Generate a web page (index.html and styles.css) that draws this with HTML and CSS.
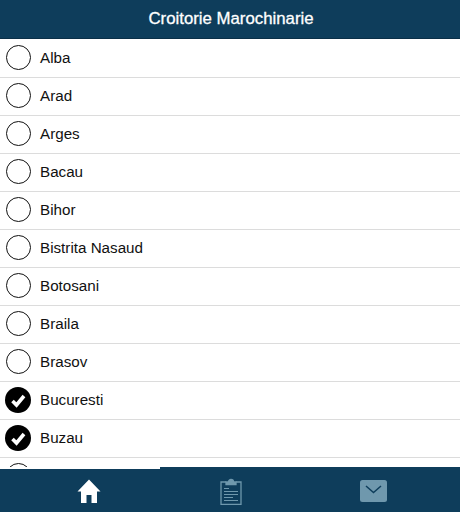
FILE: index.html
```html
<!DOCTYPE html>
<html lang="en">
<head>
    <meta charset="UTF-8">
    <meta name="viewport" content="width=device-width, initial-scale=1.0">
    <title>Croitorie Marochinarie</title>
    <link rel="stylesheet" href="styles.css">
</head>
<body>
<div class="app">
    <header class="top-bar">Croitorie Marochinarie</header>

    <!-- County list -->
    <ul class="county-list">
        <li class="county"><span class="radio"></span>Alba</li>
        <li class="county"><span class="radio"></span>Arad</li>
        <li class="county"><span class="radio"></span>Arges</li>
        <li class="county"><span class="radio"></span>Bacau</li>
        <li class="county"><span class="radio"></span>Bihor</li>
        <li class="county"><span class="radio"></span>Bistrita Nasaud</li>
        <li class="county"><span class="radio"></span>Botosani</li>
        <li class="county"><span class="radio"></span>Braila</li>
        <li class="county"><span class="radio"></span>Brasov</li>
        <li class="county">
            <span class="radio checked">
                <svg viewBox="0 0 26 26" width="26" height="26"><path d="M7.500 14l4 4 7.500-9" fill="none" stroke="#fff" stroke-width="3.600"/></svg>
            </span>Bucuresti
        </li>
        <li class="county">
            <span class="radio checked">
                <svg viewBox="0 0 26 26" width="26" height="26"><path d="M7.500 14l4 4 7.500-9" fill="none" stroke="#fff" stroke-width="3.600"/></svg>
            </span>Buzau
        </li>
        <li class="county"><span class="radio"></span></li>
    </ul>

    <!-- Tab bar -->
    <nav class="tab-bar">
        <div class="tab">
            <svg viewBox="0 0 24 24" width="24" height="24"><path d="M12 0.500L0.500 12.500H4V24h5.500v-8h5v8H20V12.500h3.500z" fill="#fff"/></svg>
        </div>
        <div class="tab">
            <svg viewBox="0 0 22 27" width="22" height="27" fill="none" stroke="#6f98ad" stroke-width="1.300">
                <path d="M6 4H1v22.300h20V4h-5"/>
                <path d="M6 6.500V4h2.500a2.500 2.500 0 0 1 5 0H16v2.500z" fill="#6f98ad"/>
                <path d="M4 10.500h5M4 13.500h14M4 16.500h14M4 19.500h9M4 22.500h14" stroke-width="1.200"/>
            </svg>
        </div>
        <div class="tab">
            <svg viewBox="0 0 27 22" width="27" height="22"><rect width="27" height="22" rx="2.500" fill="#6f98ad"/><path d="M6 6l7.500 6.500L21 6" fill="none" stroke="#0e3d5b" stroke-width="1.500"/></svg>
        </div>
    </nav>
</div>
</body>
</html>
```

FILE: styles.css
```css
html, body {
    margin: 0;
    padding: 0;
}
body {
    font-family: "Liberation Sans", Arial, sans-serif;
    background-color: #fff;
}
.app {
    display: flex;
    flex-direction: column;
    width: 460px;
    height: 512px;
    overflow: hidden;
}
.top-bar {
    flex: none;
    height: 39px;
    padding-left: 2px;
    line-height: 37px;
    text-align: center;
    font-size: 16.8px;
    color: #fff;
    -webkit-text-stroke: 0.3px #fff;
    background-color: #0e3d5b;
    border-bottom: 1px solid #0a2f47;
    box-sizing: border-box;
}
.county-list {
    flex: 1;
    min-height: 0;
    margin: 0;
    padding: 1px 0 0;
    list-style: none;
    overflow: hidden;
}
.county {
    display: flex;
    align-items: center;
    gap: 9px;
    height: 38px;
    padding-left: 5px;
    padding-bottom: 2px;
    font-size: 15.2px;
    color: #111;
    border-bottom: 1px solid #dcdcdc;
    box-sizing: border-box;
}
.radio {
    flex: none;
    width: 25px;
    height: 25px;
    margin-left: 1px;
    border: 1px solid #111;
    border-radius: 50%;
    box-sizing: border-box;
}
.radio.checked {
    display: flex;
    width: 26px;
    height: 26px;
    margin-left: 0;
    border: none;
    background-color: #000;
}
.tab-bar {
    position: relative;
    flex: none;
    display: flex;
    height: 45px;
    padding: 3px 15px 0 18px;
    background-color: #0e3d5b;
    box-sizing: border-box;
}
.tab-bar::before {
    content: "";
    position: absolute;
    left: 0;
    top: 0;
    width: 160px;
    height: 2px;
    background-color: #fff;
}
.tab {
    flex: 1;
    display: flex;
    align-items: center;
    justify-content: center;
}
```
